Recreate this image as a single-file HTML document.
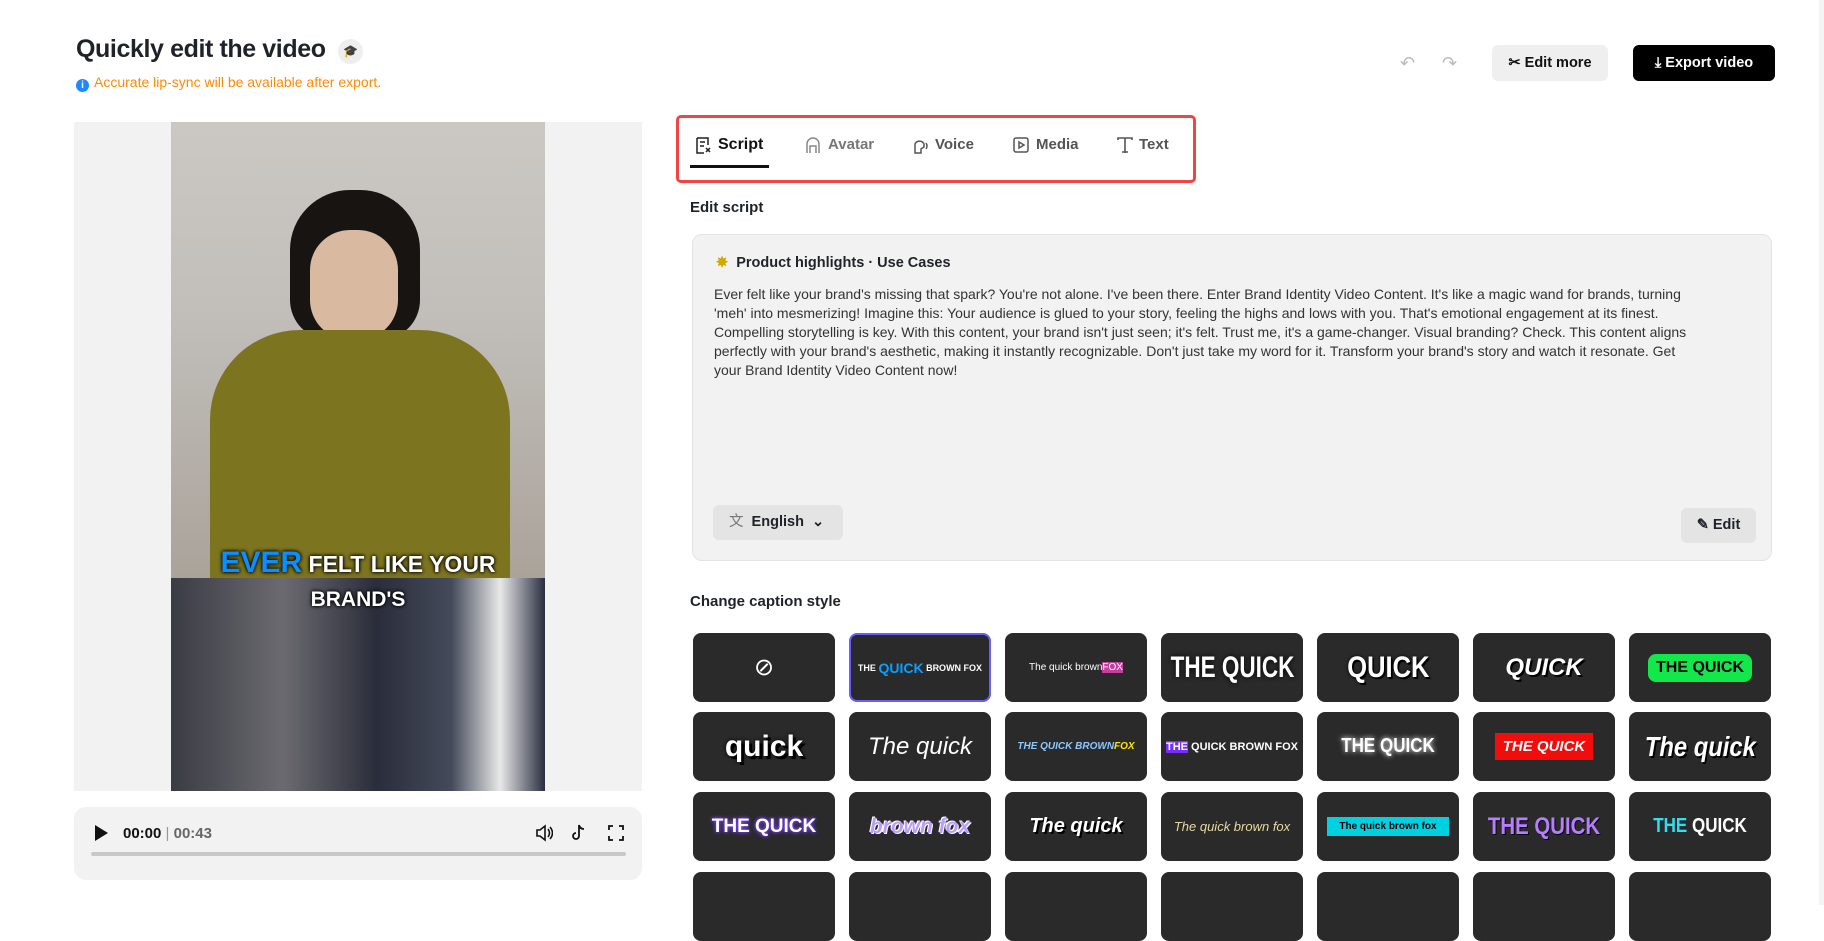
<!DOCTYPE html>
<html><head><meta charset="utf-8"><style>
*{box-sizing:border-box;margin:0;padding:0}
body{width:1824px;height:905px;background:#fff;font-family:"Liberation Sans",sans-serif;color:#1f2329;position:relative;overflow:hidden}
.a{position:absolute}
.title{left:76px;top:35px;font-size:25px;font-weight:bold;letter-spacing:-0.4px}
.hat{left:338px;top:39px;width:25px;height:25px;border-radius:50%;background:#eee;color:#888;font-size:12px;text-align:center;line-height:25px}
.note{left:76px;top:74px;font-size:14px;color:#ff8a00}
.note i{display:inline-block;width:13px;height:13px;border-radius:50%;background:#1e88ff;color:#fff;font-size:10px;font-style:normal;text-align:center;line-height:13px;vertical-align:-1px;margin-right:5px;font-weight:bold}
.vid{left:74px;top:122px;width:568px;height:669px;background:#f2f2f2}
.top{left:171px;top:122px;width:374px;height:456px;background:linear-gradient(180deg,#cbc8c4 0%,#c2bfbb 40%,#aaa39a 100%)}
.bot{left:171px;top:578px;width:374px;height:213px;background:linear-gradient(90deg,#3a3c44 0%,#6b6a70 30%,#2a2d3a 55%,#444a5a 75%,#e8e8e8 88%,#2a2e40 100%)}
.ctrl{left:74px;top:807px;width:568px;height:73px;background:#f2f2f2;border-radius:12px}
.tabs{left:676px;top:115px;width:520px;height:68px;border:3px solid #f04545;border-radius:5px}
.tab{top:136px;font-size:15px;color:#555;font-weight:bold}
.btn{top:45px;height:36px;border-radius:6px;font-size:14.5px;font-weight:bold;line-height:36px;text-align:center}
.box{left:692px;top:234px;width:1080px;height:327px;background:#f2f2f2;border:1px solid #e4e4e4;border-radius:10px}
.txt{left:714px;top:285px;font-size:14px;line-height:19px;color:#333;white-space:nowrap}
.cell{position:absolute;width:142px;height:69px;background:#2a2a2a;border-radius:8px;display:flex;align-items:center;justify-content:center;color:#fff;font-weight:bold;overflow:hidden;white-space:nowrap}
.n{display:inline-block;transform:scaleX(.75)}
</style></head><body>
<div class="a title">Quickly edit the video</div>
<div class="a hat">🎓</div>
<div class="a note"><i>i</i>Accurate lip-sync will be available after export.</div>

<div class="a vid"></div>
<div class="a top"></div>
<div class="a" style="left:290px;top:190px;width:130px;height:150px;border-radius:60px 60px 40px 40px;background:#181412"></div>
<div class="a" style="left:310px;top:230px;width:88px;height:110px;border-radius:40px;background:#d9b9a0"></div>
<div class="a" style="left:210px;top:330px;width:300px;height:248px;border-radius:90px 90px 0 0;background:#7d7420"></div>
<div class="a bot"></div>
<div class="a" style="left:171px;top:546px;width:374px;text-align:center;font:900 23px 'Liberation Sans';color:#fff;text-shadow:0 0 4px #000,0 0 3px #000"><span style="color:#0a8fff;font-size:30px">EVER</span> FELT LIKE YOUR</div>
<div class="a" style="left:171px;top:588px;width:374px;text-align:center;font:900 21px 'Liberation Sans';color:#fff;text-shadow:0 0 4px #000,0 0 3px #000">BRAND'S</div>

<div class="a ctrl"></div>
<svg class="a" style="left:93px;top:824px" width="16" height="18"><path d="M2 1L15 9L2 17Z" fill="#111"/></svg>
<div class="a" style="left:123px;top:825px;font-size:15px;font-weight:bold;color:#111">00:00 <span style="color:#999;font-weight:normal">|</span> <span style="color:#666">00:43</span></div>
<svg class="a" style="left:535px;top:824px" width="18" height="18" fill="none" stroke="#111" stroke-width="1.6"><path d="M2 6h3l5-4v14l-5-4H2z M13 5q3 4 0 8 M15 3q5 6 0 12"/></svg>
<svg class="a" style="left:571px;top:824px" width="16" height="18" fill="none" stroke="#111" stroke-width="1.8"><path d="M8 1v11a3 3 0 1 1-3-3 M8 1q1 4 5 4"/></svg>
<svg class="a" style="left:608px;top:825px" width="16" height="16" fill="none" stroke="#111" stroke-width="1.8"><path d="M1 5V1h4 M11 1h4v4 M15 11v4h-4 M5 15H1v-4"/></svg>
<div class="a" style="left:91px;top:852px;width:535px;height:4px;background:#c8c8c8;border-radius:2px"></div>

<div class="a tabs"></div>
<svg class="a" style="left:695px;top:137px" width="17" height="17" fill="none" stroke="#222" stroke-width="1.5"><path d="M2 1h11v7 M2 1v15h7 M5 5h5 M5 9h4 M11 11l4 4 M15 11l-4 4"/></svg>
<div class="a tab" style="left:718px;color:#111;font-size:16px;top:136px">Script</div>
<div class="a" style="left:690px;top:165px;width:79px;height:3px;background:#111"></div>
<svg class="a" style="left:805px;top:137px" width="16" height="17" fill="none" stroke="#888" stroke-width="1.5"><path d="M2 16V7a6 6 0 0 1 12 0v9 M5 16V9h6v7"/></svg>
<div class="a tab" style="left:828px;color:#777">Avatar</div>
<svg class="a" style="left:912px;top:137px" width="16" height="17" fill="none" stroke="#555" stroke-width="1.5"><path d="M3 16V7a5 5 0 0 1 9 0v3l-3 2v4z M14 6q2 3 0 6"/></svg>
<div class="a tab" style="left:935px">Voice</div>
<svg class="a" style="left:1013px;top:137px" width="16" height="16" fill="none" stroke="#555" stroke-width="1.5"><rect x="1" y="1" width="14" height="14" rx="2"/><path d="M6 5l5 3-5 3z"/></svg>
<div class="a tab" style="left:1036px">Media</div>
<svg class="a" style="left:1117px;top:137px" width="16" height="16" fill="none" stroke="#555" stroke-width="1.6"><path d="M1 3V1h14v2 M8 1v15 M5 15h6"/></svg>
<div class="a tab" style="left:1139px">Text</div>

<div class="a" style="left:1400px;top:53px;font-size:18px;color:#bbb">↶</div>
<div class="a" style="left:1442px;top:53px;font-size:18px;color:#bbb">↷</div>
<div class="a btn" style="left:1492px;width:116px;background:#efefef;color:#111">✂ Edit more</div>
<div class="a btn" style="left:1633px;width:142px;background:#000;color:#fff">⤓ Export video</div>

<div class="a" style="left:690px;top:199px;font-size:15px;font-weight:bold">Edit script</div>
<div class="a box"></div>
<div class="a" style="left:716px;top:255px;font-size:14.5px;font-weight:bold"><span style="color:#d4a800">✸</span>&nbsp; Product highlights · Use Cases</div>
<div class="a txt">Ever felt like your brand's missing that spark? You're not alone. I've been there. Enter Brand Identity Video Content. It's like a magic wand for brands, turning<br>'meh' into mesmerizing! Imagine this: Your audience is glued to your story, feeling the highs and lows with you. That's emotional engagement at its finest.<br>Compelling storytelling is key. With this content, your brand isn't just seen; it's felt. Trust me, it's a game-changer. Visual branding? Check. This content aligns<br>perfectly with your brand's aesthetic, making it instantly recognizable. Don't just take my word for it. Transform your brand's story and watch it resonate. Get<br>your Brand Identity Video Content now!</div>
<div class="a" style="left:713px;top:505px;width:130px;height:35px;background:#e4e4e4;border-radius:6px;font-size:14.5px;font-weight:bold;line-height:35px;padding-left:16px"><span style="color:#777;font-weight:normal">文</span>&nbsp; English &nbsp;⌄</div>
<div class="a" style="left:1681px;top:508px;width:75px;height:35px;background:#e4e4e4;border-radius:6px;font-size:14.5px;font-weight:bold;line-height:35px;text-align:center">✎ Edit</div>

<div class="a" style="left:690px;top:593px;font-size:15px;font-weight:bold">Change caption style</div>

<div class="cell" style="left:693px;top:633px;font-size:24px;font-weight:normal">⊘</div>
<div class="cell" style="left:849px;top:633px;border:2px solid #6a5cff;font-size:9px">THE&nbsp;<span style="color:#0a9fff;font-size:14px">QUICK</span>&nbsp;BROWN FOX</div>
<div class="cell" style="left:1005px;top:633px;font-size:10px;font-weight:normal">The quick brown <span style="background:#c63fa0">FOX</span></div>
<div class="cell" style="left:1161px;top:633px;font-size:30px;text-shadow:0 0 6px #000"><span class="n">THE QUICK</span></div>
<div class="cell" style="left:1317px;top:633px;font-size:30px;text-shadow:0 0 4px #000,2px 2px 0 #000"><span class="n" style="transform:scaleX(.85)">QUICK</span></div>
<div class="cell" style="left:1473px;top:633px;font-size:24px;font-style:italic;text-shadow:2px 2px 0 #000">QUICK</div>
<div class="cell" style="left:1629px;top:633px"><span style="background:#13e84a;color:#000;padding:5px 8px;border-radius:8px;font-size:16px">THE QUICK</span></div>

<div class="cell" style="left:693px;top:712px;font-size:30px;text-shadow:0 0 4px #000,3px 3px 0 #000">quick</div>
<div class="cell" style="left:849px;top:712px;font-size:24px;font-weight:normal;font-style:italic">The quick</div>
<div class="cell" style="left:1005px;top:712px;font-size:10px;color:#8cc8ff;font-style:italic">THE QUICK BROWN <span style="color:#ffe600">FOX</span></div>
<div class="cell" style="left:1161px;top:712px;font-size:11px"><span style="background:#7a2cff">THE</span>&nbsp;QUICK BROWN FOX</div>
<div class="cell" style="left:1317px;top:712px;font-size:20px;text-shadow:0 0 6px #fff"><span class="n" style="transform:scaleX(.85)">THE QUICK</span></div>
<div class="cell" style="left:1473px;top:712px"><span style="background:#f20d0d;padding:5px 8px;font-size:15px;font-style:italic">THE QUICK</span></div>
<div class="cell" style="left:1629px;top:712px;font-size:28px;font-style:italic;text-shadow:2px 2px 0 #000"><span class="n" style="transform:scaleX(.85)">The quick</span></div>

<div class="cell" style="left:693px;top:792px;font-size:19px;text-shadow:0 0 5px #8a4dff,0 0 3px #6a2cff">THE QUICK</div>
<div class="cell" style="left:849px;top:792px;font-size:21px;font-style:italic;color:#b99cff;text-shadow:1px 1px 0 #fff,-1px -1px 0 #fff">brown fox</div>
<div class="cell" style="left:1005px;top:792px;font-size:20px;font-style:italic;text-shadow:2px 2px 0 #000">The quick</div>
<div class="cell" style="left:1161px;top:792px;font-size:13px;font-weight:normal;font-style:italic;color:#e8d9a0">The quick brown fox</div>
<div class="cell" style="left:1317px;top:792px"><span style="background:#00d0e0;color:#000;padding:4px 12px;font-size:10px">The quick brown fox</span></div>
<div class="cell" style="left:1473px;top:792px;font-size:24px;color:#b77dff;text-shadow:1px 1px 0 #000"><span class="n" style="transform:scaleX(.85)">THE QUICK</span></div>
<div class="cell" style="left:1629px;top:792px;font-size:20px;color:#fff"><span class="n" style="transform:scaleX(.85)"><span style="color:#2fe0f0">THE</span>&nbsp;QUICK</span></div>

<div class="cell" style="left:693px;top:872px"></div>
<div class="cell" style="left:849px;top:872px"></div>
<div class="cell" style="left:1005px;top:872px"></div>
<div class="cell" style="left:1161px;top:872px"></div>
<div class="cell" style="left:1317px;top:872px"></div>
<div class="cell" style="left:1473px;top:872px"></div>
<div class="cell" style="left:1629px;top:872px"></div>
<div class="a" style="left:1819px;top:0;width:5px;height:905px;background:#f4f4f4"></div>
</body></html>
